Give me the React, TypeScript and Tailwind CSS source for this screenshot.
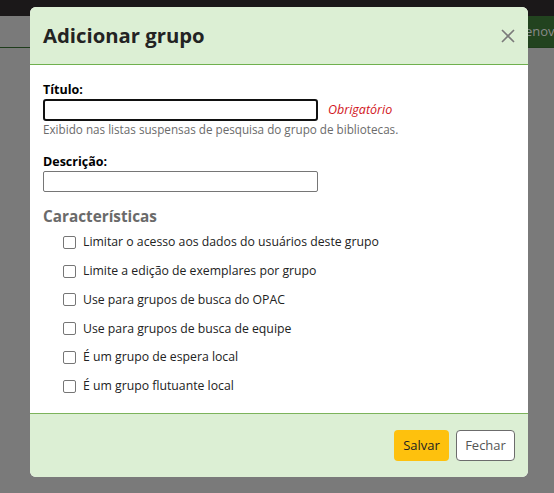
export default function App() {
  const options = [
    "Limitar o acesso aos dados do usuários deste grupo",
    "Limite a edição de exemplares por grupo",
    "Use para grupos de busca do OPAC",
    "Use para grupos de busca de equipe",
    "É um grupo de espera local",
    "É um grupo flutuante local",
  ];

  return (
    <div className="relative h-[493px] w-[554px] overflow-hidden bg-[#7a7a7a] font-['Open_Sans',sans-serif]">
      {/* page behind the overlay */}
      <div className="h-4 bg-[#1b1819]" />
      <div className="flex h-8 border-b border-[#1f3d1c]">
        <div className="flex-1" />
        <div className="flex w-[31px] items-center overflow-hidden whitespace-nowrap bg-[#22431f] text-[13px] text-[#8a8a8a]">
          <span className="-ml-[6px]">Renovar</span>
        </div>
      </div>

      {/* dialog */}
      <div className="absolute left-[30px] top-[7px] flex h-[470px] w-[498px] flex-col overflow-hidden rounded-[6px] bg-white">
        <div className="flex h-[58px] items-center justify-between border-b border-[#6fb04e] bg-[#dcefd4] pl-[13px] pr-[12px]">
          <h1 className="text-[20.3px] font-bold text-[#232323]">Adicionar grupo</h1>
          <button type="button" className="text-[#7a7a7a]">
            <svg width="16" height="16" viewBox="0 0 16 16" fill="none" stroke="currentColor" strokeWidth="1.6">
              <path d="M2 2l12 12M14 2L2 14" />
            </svg>
          </button>
        </div>

        <div className="flex-1 px-[13px] pt-[17px]">
          <label className="block text-[12.5px] font-bold leading-[16px] text-black">Título:</label>
          <div className="mt-[1px] flex items-center gap-[10px]">
            <input className="h-[22px] w-[275px] rounded-[3px] border-2 border-[#111] outline-none" />
            <span className="text-[12.5px] italic text-[#d1141c]">Obrigatório</span>
          </div>
          <p className="mt-[1px] text-[11.7px] leading-[14px] text-[#6b6b6b]">
            Exibido nas listas suspensas de pesquisa do grupo de bibliotecas.
          </p>

          <label className="mt-[18px] block text-[12.5px] font-bold leading-[16px] text-black">Descrição:</label>
          <input className="mt-[1px] block h-[21px] w-[275px] rounded-[2px] border border-[#767676] outline-none" />

          <h2 className="mt-[12px] text-[15.3px] font-bold leading-[24px] text-[#6a6a6a]">Características</h2>
          <ul className="flex flex-col pl-[20px]">
            {options.map((o) => (
              <li key={o} className="flex h-[28.8px] items-center gap-[7px] text-[12.25px] text-[#222]">
                <span className="h-[13px] w-[13px] rounded-[2px] border border-[#767676] bg-white" />
                {o}
              </li>
            ))}
          </ul>
        </div>

        <div className="flex h-[64px] items-center justify-end gap-[7px] border-t border-[#7cb35b] bg-[#dcefd4] pr-[13px]">
          <button type="button" className="h-[31px] w-[55px] rounded-[4px] bg-[#fec10d] text-[13px] text-[#222]">
            Salvar
          </button>
          <button type="button" className="h-[31px] w-[59px] rounded-[4px] border border-[#6c6c6c] bg-white text-[13px] text-[#555]">
            Fechar
          </button>
        </div>
      </div>
    </div>
  );
}
